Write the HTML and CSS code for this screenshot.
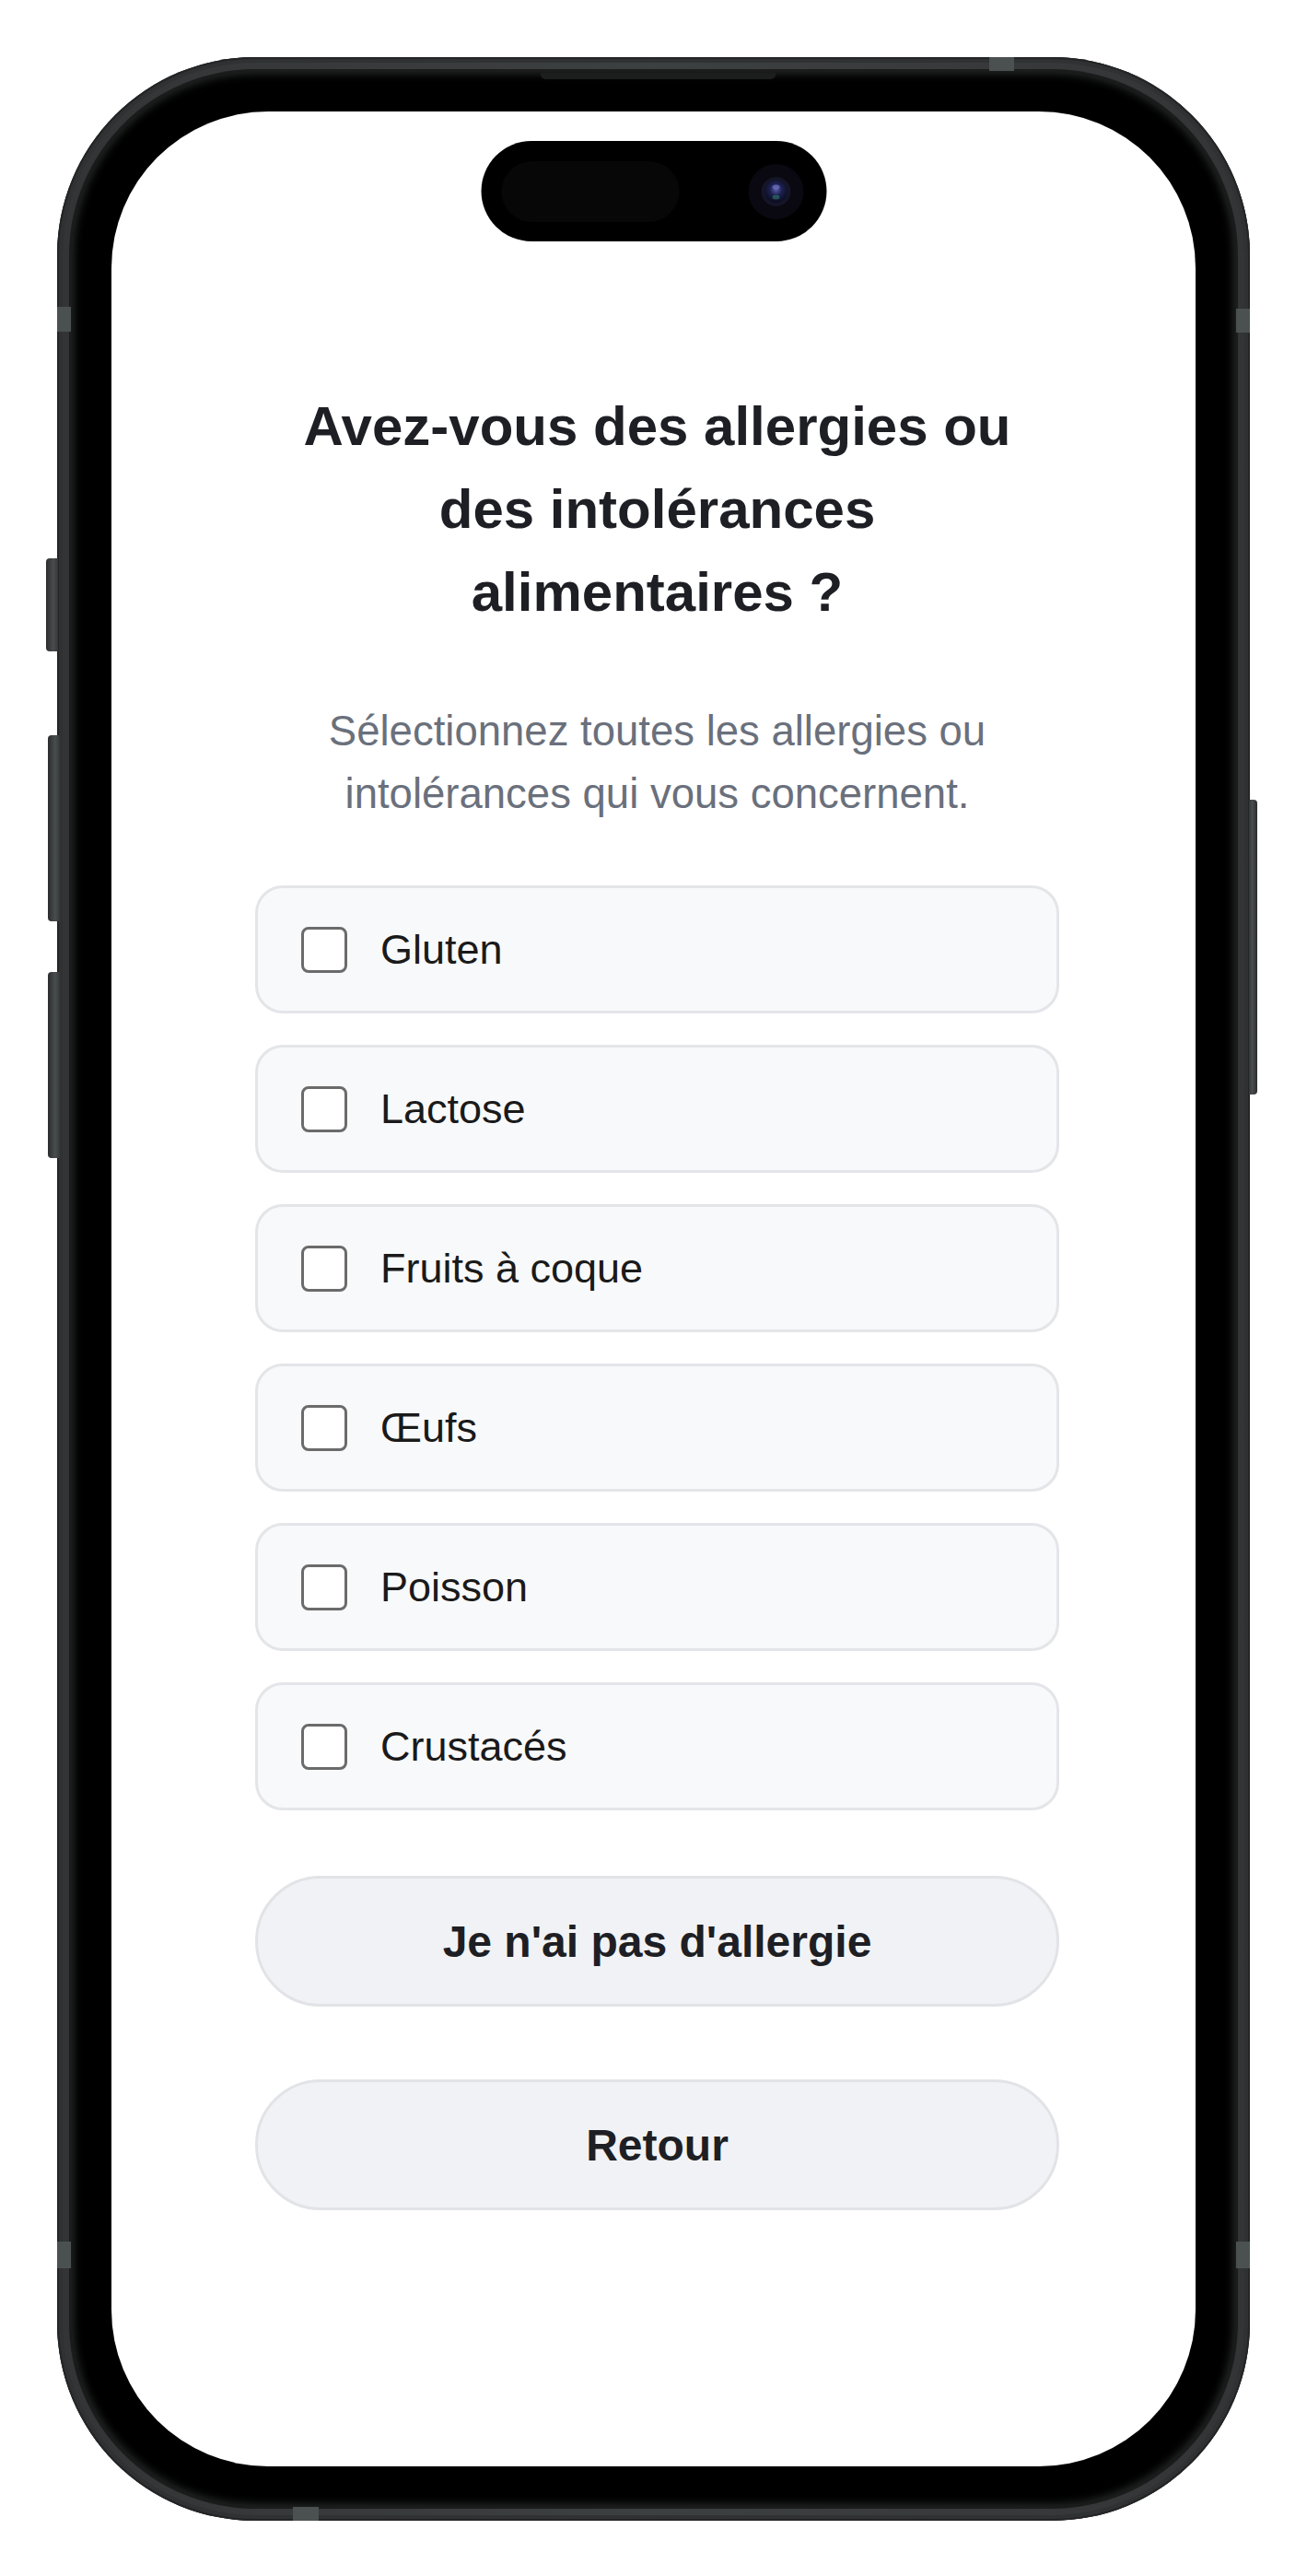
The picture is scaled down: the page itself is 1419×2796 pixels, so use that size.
FILE: index.html
```html
<!DOCTYPE html>
<html lang="fr">
<head>
    <meta charset="UTF-8">
    <meta name="viewport" content="width=device-width, initial-scale=1.0">
    <title>Allergies et intolérances</title>
    <link rel="stylesheet" href="styles.css">
</head>
<body>
    <div class="phone">
        <span class="side-btn action"></span>
        <span class="side-btn vol-up"></span>
        <span class="side-btn vol-down"></span>
        <span class="side-btn power"></span>
        <span class="band band-top"></span>
        <span class="band band-bottom"></span>
        <span class="band band-left-top"></span>
        <span class="band band-right-top"></span>
        <span class="band band-left-bottom"></span>
        <span class="band band-right-bottom"></span>
        <span class="earpiece"></span>

        <div class="bezel">
            <div class="screen">
                <div class="island">
                    <span class="island-sensor"></span>
                    <svg class="island-camera" width="60" height="60" viewBox="0 0 60 60">
                        <defs>
                            <radialGradient id="lens" cx="50%" cy="40%" r="60%">
                                <stop offset="0%" stop-color="#5b5fa8"/>
                                <stop offset="45%" stop-color="#1d2050"/>
                                <stop offset="100%" stop-color="#0a0b1c"/>
                            </radialGradient>
                        </defs>
                        <circle cx="30" cy="30" r="30" fill="#0a0810"/>
                        <circle cx="30" cy="30" r="16" fill="#141627"/>
                        <circle cx="30" cy="30" r="12" fill="url(#lens)"/>
                        <ellipse cx="30" cy="25" rx="4" ry="2.5" fill="#6f73c4" opacity="0.7"/>
                        <ellipse cx="30" cy="36" rx="4" ry="2.5" fill="#2f7a6a" opacity="0.6"/>
                    </svg>
                </div>

                <main class="content">
                    <h1 class="title">Avez-vous des allergies ou des intolérances alimentaires&nbsp;?</h1>
                    <p class="subtitle">Sélectionnez toutes les allergies ou intolérances qui vous concernent.</p>

                    <div class="options">
                        <label class="option">
                            <input type="checkbox" class="option-check">
                            <span class="option-label">Gluten</span>
                        </label>
                        <label class="option">
                            <input type="checkbox" class="option-check">
                            <span class="option-label">Lactose</span>
                        </label>
                        <label class="option">
                            <input type="checkbox" class="option-check">
                            <span class="option-label">Fruits à coque</span>
                        </label>
                        <label class="option">
                            <input type="checkbox" class="option-check">
                            <span class="option-label">Œufs</span>
                        </label>
                        <label class="option">
                            <input type="checkbox" class="option-check">
                            <span class="option-label">Poisson</span>
                        </label>
                        <label class="option">
                            <input type="checkbox" class="option-check">
                            <span class="option-label">Crustacés</span>
                        </label>
                    </div>

                    <button class="btn btn-none">Je n'ai pas d'allergie</button>
                    <button class="btn btn-back">Retour</button>
                </main>
            </div>
        </div>
    </div>
</body>
</html>
```

FILE: styles.css
```css
* {
    margin: 0;
    padding: 0;
    box-sizing: border-box;
    font-family: 'Liberation Sans', Arial, Helvetica, sans-serif;
}

body {
    width: 1419px;
    height: 2796px;
    display: flex;
    justify-content: center;
    align-items: flex-start;
    padding-top: 62px;
    background: #ffffff;
    overflow: hidden;
}

/* phone shell */
.phone {
    position: relative;
    width: 1295px;
    height: 2674px;
    padding: 15px;
    border-radius: 215px;
    background: linear-gradient(90deg, #323435, #3d4041 50%, #323435);
    box-shadow: inset 0 0 0 2px #232526, inset 0 0 0 6px #2f3132;
}

.bezel {
    height: 100%;
    padding: 44px;
    border-radius: 200px;
    background: #000;
    box-shadow: 0 0 0 2px #1b1c1c, inset 0 0 10px 3px rgba(70, 72, 72, 0.55);
}

.screen {
    position: relative;
    height: 100%;
    border-radius: 170px;
    background: #ffffff;
    overflow: hidden;
}

.side-btn {
    position: absolute;
    width: 13px;
    border-radius: 4px 0 0 4px;
    background: linear-gradient(90deg, #2a2c2d, #4a4d4e 60%, #35383a);
}

.side-btn.action { left: -12px; top: 544px; height: 101px; }
.side-btn.vol-up { left: -10px; top: 736px; height: 202px; }
.side-btn.vol-down { left: -10px; top: 993px; height: 202px; }

.side-btn.power {
    right: -8px;
    top: 806px;
    width: 9px;
    height: 320px;
    border-radius: 0 4px 4px 0;
    background: linear-gradient(90deg, #35383a, #4a4d4e 40%, #2a2c2d);
}

.band {
    position: absolute;
    background: #4b5050;
}

.band-top { top: 0; left: 1012px; width: 27px; height: 15px; }
.band-bottom { bottom: 0; left: 256px; width: 28px; height: 15px; }
.band-left-top { left: 0; top: 271px; width: 15px; height: 27px; }
.band-right-top { right: 0; top: 273px; width: 15px; height: 26px; }
.band-left-bottom { left: 0; top: 2371px; width: 15px; height: 29px; }
.band-right-bottom { right: 0; top: 2371px; width: 15px; height: 29px; }

.earpiece {
    position: absolute;
    top: 17px;
    left: 525px;
    width: 255px;
    height: 7px;
    border-radius: 0 0 5px 5px;
    background: #1c1d1d;
}

/* dynamic island */
.island {
    position: absolute;
    top: 32px;
    left: 50%;
    transform: translateX(-50%);
    width: 375px;
    height: 109px;
    display: flex;
    align-items: center;
    justify-content: space-between;
    padding: 0 25px 0 22px;
    border-radius: 55px;
    background: #000;
    z-index: 2;
}

.island-sensor {
    width: 193px;
    height: 66px;
    border-radius: 33px;
    background: #070707;
}

/* screen content */
.content {
    padding: 297px 148px 0 156px;
    display: flex;
    flex-direction: column;
}

.title {
    max-width: 800px;
    margin: 0 auto;
    font-size: 60px;
    line-height: 90px;
    font-weight: bold;
    text-align: center;
    color: #1e1f24;
}

.subtitle {
    margin-top: 72px;
    font-size: 45.5px;
    line-height: 67.5px;
    text-align: center;
    color: #6a707c;
}

.options {
    margin-top: 66px;
    display: flex;
    flex-direction: column;
    gap: 34px;
}

.option {
    display: flex;
    align-items: center;
    gap: 36px;
    padding: 41px 47px;
    border: 3px solid #e4e5e9;
    border-radius: 30px;
    background: #f8f9fa;
}

.option-check {
    appearance: none;
    -webkit-appearance: none;
    flex-shrink: 0;
    width: 50px;
    height: 50px;
    border: 3px solid #6b6b6b;
    border-radius: 8px;
    background: #ffffff;
}

.option-label {
    font-size: 45px;
    line-height: 51px;
    color: #1a1a1a;
}

.btn {
    height: 142px;
    border: 3px solid #e2e3e7;
    border-radius: 71px;
    background: #f1f2f5;
    font-size: 48px;
    font-weight: bold;
    color: #1e1f24;
}

.btn-none {
    margin-top: 71px;
}

.btn-back {
    margin-top: 79px;
}
```
